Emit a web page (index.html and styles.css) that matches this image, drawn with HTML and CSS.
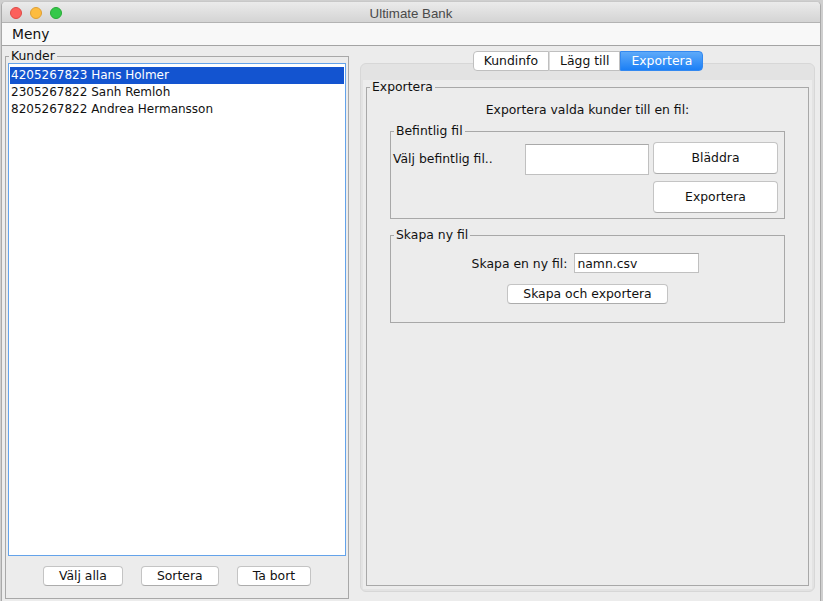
FILE: index.html
```html
<!DOCTYPE html>
<html lang="sv">
<head>
<meta charset="utf-8">
<title>Ultimate Bank</title>
<link rel="stylesheet" href="styles.css">
</head>
<body>
<div class="window">
  <div class="titlebar">
    <div class="lights">
      <span class="light red"></span>
      <span class="light yellow"></span>
      <span class="light green"></span>
    </div>
    <div class="title">Ultimate Bank</div>
    <div></div>
  </div>
  <div class="menubar"><span class="menu">Meny</span></div>
  <div class="content">
    <fieldset class="group kunder">
      <legend>Kunder</legend>
      <ul class="list">
        <li class="selected">4205267823 Hans Holmer</li>
        <li>2305267822 Sanh Remloh</li>
        <li>8205267822 Andrea Hermansson</li>
      </ul>
      <div class="list-buttons">
        <button class="btn">Välj alla</button>
        <button class="btn">Sortera</button>
        <button class="btn">Ta bort</button>
      </div>
    </fieldset>
    <div class="tabbed">
      <div class="tabs">
        <span class="tab">Kundinfo</span>
        <span class="tab">Lägg till</span>
        <span class="tab active">Exportera</span>
      </div>
      <div class="tab-panel">
        <div class="tab-inner">
          <fieldset class="group export">
            <legend>Exportera</legend>
            <div class="heading">Exportera valda kunder till en fil:</div>
            <fieldset class="group sub existing">
              <legend>Befintlig fil</legend>
              <div class="existing-grid">
                <span class="label">Välj befintlig fil..</span>
                <input class="field tall-field" type="text" value="">
                <button class="btn tall">Bläddra</button>
                <button class="btn tall second">Exportera</button>
              </div>
            </fieldset>
            <fieldset class="group sub newfile">
              <legend>Skapa ny fil</legend>
              <div class="new-row">
                <span class="label">Skapa en ny fil:</span>
                <input class="field small-field" type="text" value="namn.csv">
              </div>
              <div class="new-button">
                <button class="btn wide">Skapa och exportera</button>
              </div>
            </fieldset>
          </fieldset>
        </div>
      </div>
    </div>
  </div>
</div>
</body>
</html>
```
FILE: styles.css
```css
html, body {
  margin: 0;
  padding: 0;
}
body {
  background: #cfcfcf;
  font-family: "DejaVu Sans", sans-serif;
  font-size: 12.4px;
  color: #111;
  overflow: hidden;
}
.window {
  box-sizing: border-box;
  margin: 1px 0 0 1px;
  width: 820px;
  height: 600px;
  border: 1px solid #a9a9a9;
  border-top-color: #c8c8c8;
  border-bottom: none;
  border-radius: 5px 5px 0 0;
  background: #ececec;
  overflow: hidden;
}
.titlebar {
  height: 20px;
  display: grid;
  grid-template-columns: 1fr auto 1fr;
  align-items: center;
  background: linear-gradient(#ebebeb, #d4d4d4);
  border-bottom: 1px solid #b3b3b3;
}
.lights {
  display: flex;
  gap: 8px;
  padding-left: 8px;
  padding-top: 2px;
}
.light {
  box-sizing: border-box;
  width: 12px;
  height: 12px;
  border-radius: 50%;
}
.red { background: #fc605c; border: 1px solid #de4a46; }
.yellow { background: #fdbc40; border: 1px solid #de9f34; }
.green { background: #34c84a; border: 1px solid #27aa35; }
.title {
  font-family: "Liberation Sans", sans-serif;
  font-size: 13.3px;
  color: #4a4a4a;
  padding-top: 2px;
}
.menubar {
  height: 22px;
  background: #f8f8f8;
  border-bottom: 1px solid #a4a4a4;
  display: flex;
  align-items: center;
}
.menu {
  font-size: 13.8px;
  padding-left: 10px;
  color: #111;
}
.content {
  box-sizing: border-box;
  height: 555px;
  display: flex;
  padding: 3px 5px 2px 3px;
}
fieldset.group {
  margin: 0;
  padding: 0;
  border: 1px solid #a8a8a8;
  min-width: 0;
}
fieldset.group > legend {
  padding: 0 2px;
  margin-left: 3px;
  line-height: 14px;
  color: #111;
}
.kunder {
  width: 344px;
  box-sizing: border-box;
  display: flex;
  flex-direction: column;
}
.list {
  flex: 1;
  margin: 0 2px;
  padding: 3px 1px;
  list-style: none;
  background: #fff;
  border: 1px solid #64a3ea;
  font-size: 12px;
}
.list li {
  line-height: 17px;
  padding-left: 1px;
  white-space: nowrap;
}
.list li.selected {
  background: #1354d0;
  color: #fff;
}
.list-buttons {
  display: flex;
  justify-content: center;
  gap: 18px;
  padding: 10px 0 12px;
}
.btn {
  font: inherit;
  height: 20px;
  padding: 0 15px;
  background: #fff;
  border: 1px solid #c4c4c4;
  border-bottom-color: #acacac;
  border-radius: 4px;
  color: #111;
  line-height: 18px;
}
.btn.tall {
  height: 32px;
  width: 125px;
}
.btn.wide {
  width: 161px;
}
.tabbed {
  flex: 1;
  margin-left: 11px;
  margin-bottom: 7px;
  padding-top: 2px;
  display: flex;
  flex-direction: column;
}
.tabs {
  align-self: center;
  display: flex;
  position: relative;
  z-index: 1;
  margin-bottom: -8px;
  margin-left: 1px;
}
.tab {
  padding: 0 10px;
  line-height: 18px;
  background: #fff;
  border: 1px solid #bfbfbf;
  border-left: 1px solid #dcdcdc;
  color: #111;
}
.tab:first-child {
  border-left-color: #bfbfbf;
  border-radius: 4px 0 0 4px;
}
.tab:last-child {
  border-radius: 0 4px 4px 0;
}
.tab.active {
  background: linear-gradient(#5eaaf9, #1b7ff6);
  border-color: #3288f0;
  color: #fff;
}
.tab-panel {
  flex: 1;
  display: flex;
  padding: 16px 2px 2px;
  background: #e3e3e3;
  border: 1px solid #d7d7d7;
  border-radius: 6px;
}
.tab-inner {
  flex: 1;
  display: flex;
  padding: 0 3px 3px;
  background: #ececec;
}
.export {
  flex: 1;
}
.heading {
  text-align: center;
  line-height: 16px;
  margin: 8px 0 6px;
}
.sub {
  margin: 0 23px !important;
}
.existing-grid {
  display: grid;
  grid-template-columns: 1fr 124px 125px;
  grid-template-rows: 32px 32px;
  column-gap: 4px;
  row-gap: 7px;
  padding: 4px 6px 5px 2px;
  align-items: center;
}
.existing-grid .second {
  grid-column: 3;
}
.field {
  font: inherit;
  box-sizing: border-box;
  background: #fff;
  border: 1px solid #c0c0c0;
  border-top-color: #a9a9a9;
  padding: 0 2px;
  color: #111;
  outline: none;
}
.tall-field {
  width: 124px;
  height: 31px;
  margin-top: 2px;
}
.newfile {
  margin-top: 9px !important;
}
.new-row {
  display: flex;
  justify-content: center;
  align-items: center;
  gap: 7px;
  padding-top: 11px;
  padding-right: 4px;
}
.small-field {
  width: 125px;
  height: 20px;
}
.new-button {
  display: flex;
  justify-content: center;
  padding: 11px 0 18px;
}
```
